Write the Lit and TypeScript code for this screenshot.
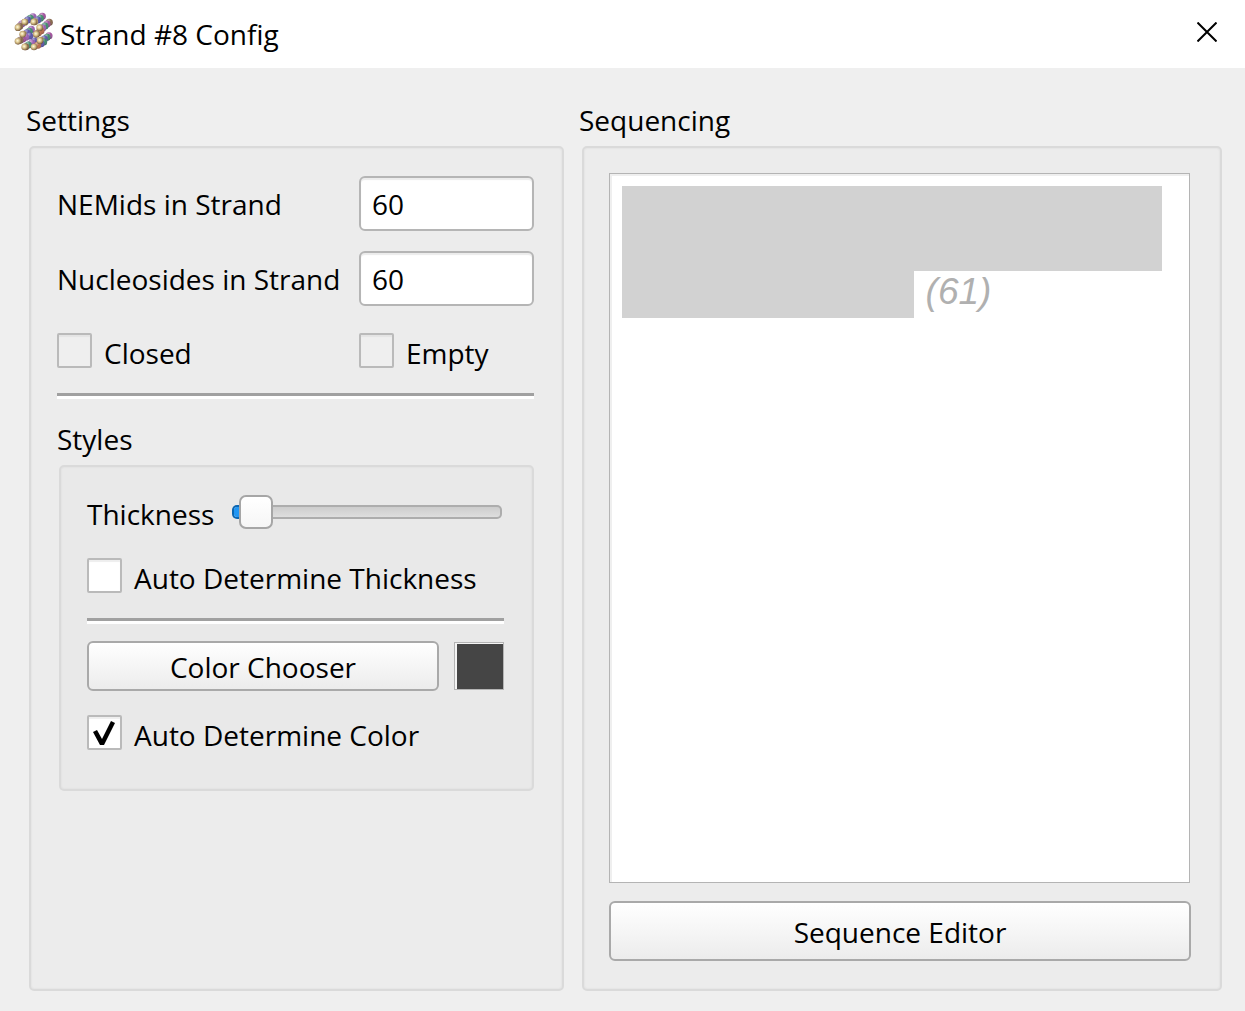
import { LitElement, html, svg, css } from "lit";
import { customElement, property, state } from "lit/decorators.js";

type Bead = [number, number, string];

/* Beads of the helix bundle, back to front. */
const BEADS: Bead[] = [
  [102, 50, "purple"], [94, 55, "green"], [86, 60, "blue"], [77, 67, "tan"],
  [68, 72, "purple"], [62, 79, "brown"],
  [130, 49, "magenta"], [124, 55, "green"], [116, 60, "blue"], [107, 65, "tan"],
  [151, 67, "brown"], [144, 72, "magenta"], [138, 78, "green"], [131, 84, "purple"], [126, 92, "orange"],
  [118, 98, "orange"], [112, 102, "brown"],
  [97, 88, "purple"], [91, 94, "green"], [84, 98, "blue"], [73, 103, "tan"],
  [92, 108, "blue"], [80, 112, "purple"], [71, 117, "magenta"], [63, 121, "brown"],
  [150, 107, "magenta"], [144, 112, "green"], [136, 117, "blue"], [126, 121, "tan"],
  [106, 123, "blue"], [98, 129, "purple"], [88, 135, "green"], [80, 140, "brown"],
  [134, 126, "green"], [126, 131, "blue"], [116, 136, "orange"],
];
const CAPS: [number, number][] = [[57, 83], [77, 66], [104, 66], [71, 103], [112, 103], [57, 124], [123, 122], [77, 141], [105, 141], [122, 83]];
const COLORS: Record<string, string> = {
  purple: "#9a5fb0", green: "#3f8a6a", blue: "#5a54a8", tan: "#b09460",
  brown: "#86664a", magenta: "#a0509c", orange: "#b86c48",
};

@customElement("helix-icon")
class HelixIcon extends LitElement {
  static styles = css`
    :host { display: block; }
    .art { display: block; width: 40px; height: 40px; }
  `;
  render() {
    return html`<svg class="art" viewBox="45 36 120 120" aria-hidden="true">
      <defs>
        <radialGradient id="cap" cx="0.42" cy="0.4" r="0.62">
          <stop offset="0" stop-color="#fffbe0" />
          <stop offset="0.45" stop-color="#dcc68e" />
          <stop offset="1" stop-color="#75583a" />
        </radialGradient>
        <radialGradient id="shine" cx="0.35" cy="0.25" r="0.8">
          <stop offset="0" stop-color="#fff" stop-opacity="0.5" />
          <stop offset="0.5" stop-color="#fff" stop-opacity="0" />
          <stop offset="1" stop-color="#201030" stop-opacity="0.25" />
        </radialGradient>
      </defs>
      ${BEADS.map(([x, y, c]) => svg`
        <circle cx=${x} cy=${y} r="10.5" fill=${COLORS[c]} />
        <circle cx=${x} cy=${y} r="10.5" fill="url(#shine)" />`)}
      ${CAPS.map(([x, y]) => svg`<circle cx=${x} cy=${y} r="10" fill="url(#cap)" />`)}
    </svg>`;
  }
}

@customElement("check-option")
class CheckOption extends LitElement {
  @property() label = "";
  @property({ type: Boolean }) checked = false;
  @property({ type: Boolean }) disabled = false;
  static styles = css`
    :host { display: block; }
    .option { display: flex; align-items: center; gap: 12px; height: 35px; }
    .box {
      appearance: none; box-sizing: border-box; flex: none;
      width: 35px; height: 35px; margin: 0;
      border: 2px solid #bababa; border-radius: 2px; background: #fff;
      box-shadow: inset 0 2px 1px #eee;
    }
    .box:disabled { background: #efefef; box-shadow: inset 0 2px 1px #e4e4e4; }
    .box:checked::before {
      content: ""; display: block; width: 31px; height: 31px; background: #000;
      clip-path: polygon(4px 15px, 8px 13px, 13px 22px, 22px 4px, 26px 6px, 15px 28px, 11px 28px);
    }
    .text { padding-top: 4px; line-height: 36px; white-space: nowrap; }
  `;
  render() {
    return html`<label class="option">
      <input class="box" type="checkbox" .checked=${this.checked} ?disabled=${this.disabled} />
      <span class="text">${this.label}</span>
    </label>`;
  }
}

@customElement("app-root")
class AppRoot extends LitElement {
  @state() private thickness = 2;

  static styles = css`
    :host {
      display: flex; flex-direction: column; min-height: 100vh;
      background: #efefef; color: #000;
      font: 28px/40px "Open Sans", "Noto Sans", sans-serif;
    }
    * { box-sizing: border-box; }
    .titlebar { display: flex; align-items: center; gap: 6px; height: 68px; padding: 0 22px 4px 14px; background: #fff; }
    .title { flex: 1; margin: 0; padding-top: 3px; font: inherit; }
    .close { width: 32px; height: 32px; padding: 6px; border: 0; background: none; }
    .cross { display: block; width: 20px; height: 20px; }
    .content {
      flex: 1; display: grid; grid-template-columns: 538fr 643fr; gap: 15px;
      padding: 32px 23px 20px 26px;
    }
    .group { display: flex; flex-direction: column; }
    .heading { margin: 0 0 6px; font: inherit; }
    .panel {
      flex: 1; display: flex; flex-direction: column; margin-left: 3px;
      padding: 28px 28px 28px 26px; border: 2px solid #dadada; border-radius: 5px;
      background: #ececec; box-shadow: inset 0 0 2px #d6d6d6;
    }
    .nested { flex: none; margin-left: 2px; padding-bottom: 39px; background: #e9e9e9; }
    .sequencing { padding: 25px 29px 28px 25px; }
    .fields { display: grid; grid-template-columns: 302fr 175fr; row-gap: 20px; align-items: center; }
    .fields label { white-space: nowrap; }
    .number {
      width: 100%; min-width: 0; height: 55px; padding: 0 11px; color: inherit; font: inherit;
      border: 2px solid #b5b5b5; border-radius: 6px; background: #fff;
      box-shadow: inset 0 2px 1px #ececec;
    }
    .flags { display: grid; grid-template-columns: 302fr 175fr; margin-top: 27px; }
    .rule { width: 100%; height: 6px; margin: 25px 0 20px; border: 0; border-top: 3px solid #a0a0a0; border-bottom: 3px solid #fff; }
    .slider-row { display: flex; align-items: center; gap: 18px; height: 34px; margin-bottom: 29px; }
    .slider-row label { padding-top: 4px; }
    .slider { appearance: none; flex: 1; min-width: 0; height: 34px; margin: 0 2px 0 0; background: none; }
    .slider::-webkit-slider-runnable-track {
      box-sizing: border-box; height: 14px; border: 2px solid transparent; border-radius: 5px;
      background:
        linear-gradient(to right, #2196f3 var(--fill), transparent var(--fill)) padding-box,
        linear-gradient(#cdcdcd, #dedede) padding-box,
        linear-gradient(to right, #0b66b2 var(--fill), #adadad var(--fill)) border-box;
    }
    .slider::-webkit-slider-thumb {
      appearance: none; box-sizing: border-box; width: 34px; height: 34px; margin-top: -12px;
      border: 2px solid #a6a6a6; border-radius: 7px; background: linear-gradient(#fff, #f6f6f6);
    }
    .nested .rule { margin-bottom: 17px; }
    .color-row { display: flex; align-items: center; gap: 15px; margin-bottom: 24px; }
    .button {
      height: 60px; padding: 2px 0 0; color: inherit; font: inherit;
      border: 2px solid #a9a9a9; border-radius: 6px; background: linear-gradient(#fff, #ececec);
      box-shadow: inset 0 1px #fff;
    }
    .color-row .button { flex: 1; height: 50px; }
    .swatch {
      width: 50px; height: 48px; padding: 0; background: #454545;
      border: 1px solid #b4b4b4; box-shadow: inset 2px 1px #f4f4f4;
    }
    .sequence {
      flex: 1; margin: 0 1px 18px 0; padding: 12px 27px 12px 12px;
      border: 1px solid #b4b4b4; background: #fff; box-shadow: inset 2px 2px #efefef;
    }
    .block { height: 85px; background: #d2d2d2; }
    .tail-row { display: flex; gap: 12px; }
    .tail { width: 54%; height: 47px; background: #d2d2d2; }
    .count { color: #b0b0b0; font: italic 37px/42px "Liberation Sans", sans-serif; }
  `;

  private onThickness(e: Event) {
    this.thickness = Number((e.target as HTMLInputElement).value);
  }

  render() {
    return html`
      <header class="titlebar">
        <helix-icon></helix-icon>
        <h1 class="title">Strand #8 Config</h1>
        <button class="close" aria-label="Close">
          <svg class="cross" viewBox="0 0 20 20"><path d="M0.5 0.5L19.5 19.5M19.5 0.5L0.5 19.5" stroke="#000" stroke-width="2" /></svg>
        </button>
      </header>
      <main class="content">
        <section class="group">
          <h2 class="heading">Settings</h2>
          <div class="panel">
            <div class="fields">
              <label for="nemids">NEMids in Strand</label>
              <input id="nemids" class="number" type="text" value="60" />
              <label for="nucleosides">Nucleosides in Strand</label>
              <input id="nucleosides" class="number" type="text" value="60" />
            </div>
            <div class="flags">
              <check-option label="Closed" disabled></check-option>
              <check-option label="Empty" disabled></check-option>
            </div>
            <hr class="rule" />
            <section>
              <h3 class="heading">Styles</h3>
              <div class="panel nested">
                <div class="slider-row">
                  <label for="thickness">Thickness</label>
                  <input id="thickness" class="slider" type="range" min="0" max="100"
                    style="--fill: calc(${this.thickness}% + 14px)"
                    .value=${String(this.thickness)} @input=${this.onThickness} />
                </div>
                <check-option label="Auto Determine Thickness"></check-option>
                <hr class="rule" />
                <div class="color-row">
                  <button class="button">Color Chooser</button>
                  <button class="swatch" aria-label="Strand color"></button>
                </div>
                <check-option label="Auto Determine Color" checked></check-option>
              </div>
            </section>
          </div>
        </section>
        <section class="group">
          <h2 class="heading">Sequencing</h2>
          <div class="panel sequencing">
            <div class="sequence">
              <div class="block"></div>
              <div class="tail-row">
                <div class="tail"></div>
                <span class="count">(61)</span>
              </div>
            </div>
            <button class="button">Sequence Editor</button>
          </div>
        </section>
      </main>
    `;
  }
}
